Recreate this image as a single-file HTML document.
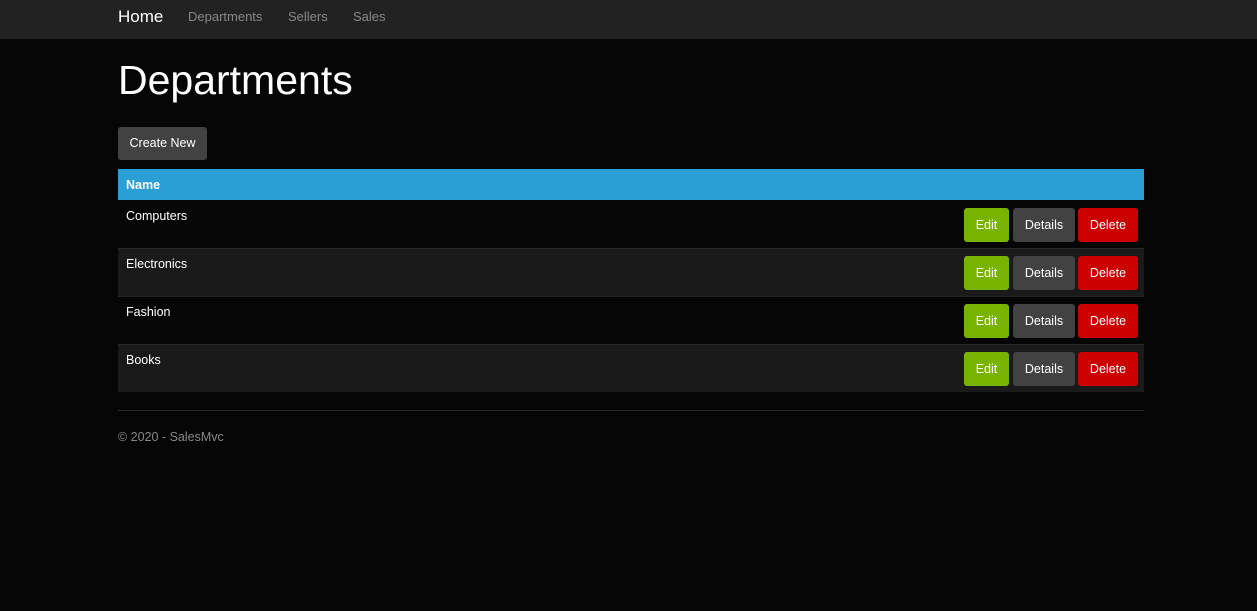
<!DOCTYPE html>
<html><head><style>
*{box-sizing:border-box;margin:0;padding:0}
body{background:#060606;font-family:"Liberation Sans",sans-serif;color:#fff;width:1257px;height:611px;overflow:hidden}
.nav{height:39px;background:#222;position:relative}
.nav a{position:absolute;top:0;line-height:34px;color:#888;font-size:13px;text-decoration:none}
h1{position:absolute;left:118px;top:56px;font-size:41px;font-weight:normal;line-height:48px}
.btn{position:absolute;border-radius:3px;font-size:12.5px;color:#fff;text-align:center;line-height:33px;height:33px}
.hdr{position:absolute;left:118px;top:169px;width:1026px;height:31px;background:#2a9fd6;font-weight:bold;font-size:12.5px;padding:9px 8px}
.row{position:absolute;left:118px;width:1026px;height:48px;box-shadow:inset 0 1px 0 #282828;font-size:12.5px;padding:9px 8px}
.row .btn{top:8px;height:34px;line-height:34px}
.e{background:#77b300;width:45px;left:846px}
.d{background:#424242;width:62px;left:895px}
.x{background:#c00;width:60px;left:960px}
</style></head><body>
<div class="nav">
<a style="left:118px;color:#fff;font-size:17px">Home</a>
<a style="left:188px">Departments</a>
<a style="left:288px">Sellers</a>
<a style="left:353px">Sales</a>
</div>
<h1>Departments</h1>
<div class="btn" style="left:118px;top:127px;width:89px;background:#424242">Create New</div>
<div class="hdr">Name</div>
<div class="row" style="top:200px;background:#060606;box-shadow:none">Computers<div class="btn e">Edit</div><div class="btn d">Details</div><div class="btn x">Delete</div></div>
<div class="row" style="top:248px;background:#1a1a1a">Electronics<div class="btn e">Edit</div><div class="btn d">Details</div><div class="btn x">Delete</div></div>
<div class="row" style="top:296px;background:#060606">Fashion<div class="btn e">Edit</div><div class="btn d">Details</div><div class="btn x">Delete</div></div>
<div class="row" style="top:344px;background:#1a1a1a">Books<div class="btn e">Edit</div><div class="btn d">Details</div><div class="btn x">Delete</div></div>
<div style="position:absolute;left:118px;top:410px;width:1026px;border-top:1px solid #282828"></div>
<div style="position:absolute;left:118px;top:430px;font-size:12.5px;color:#888">© 2020 - SalesMvc</div>
</body></html>
